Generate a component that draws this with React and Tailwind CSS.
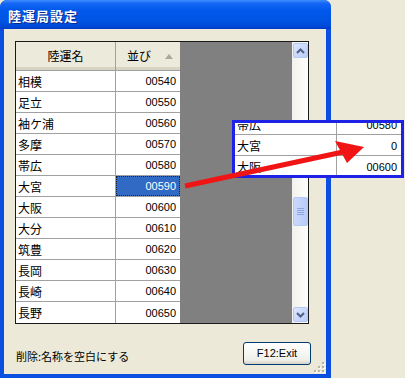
import React from "react";

const rows = [
  ["相模", "00540"],
  ["足立", "00550"],
  ["袖ケ浦", "00560"],
  ["多摩", "00570"],
  ["帯広", "00580"],
  ["大宮", "00590"],
  ["大阪", "00600"],
  ["大分", "00610"],
  ["筑豊", "00620"],
  ["長岡", "00630"],
  ["長崎", "00640"],
  ["長野", "00650"],
];

const jp = { fontFamily: '"Noto Sans CJK JP", "Noto Sans", sans-serif' };
const lat = { fontFamily: '"Liberation Sans", Arial, sans-serif' };

function Chevron({ down }) {
  return (
    <svg width="9" height="6" viewBox="0 0 9 6">
      <path
        d={down ? "M1 1 L4.5 4.5 L8 1" : "M1 5 L4.5 1.5 L8 5"}
        fill="none"
        stroke="#4D6185"
        strokeWidth="2"
      />
    </svg>
  );
}

export default function App() {
  return (
    <div className="relative w-[405px] h-[378px] overflow-hidden bg-[#ECE9D8] flex">
      {/* Window */}
      <div className="w-[331px] h-[378px] flex flex-col rounded-t-[7px] bg-[#0A4FE0]">
        {/* Title bar */}
        <div className="h-[29px] flex items-center pl-[8px] rounded-t-[7px] bg-[linear-gradient(180deg,#3D8CFF_0%,#1467F5_12%,#0058EB_35%,#0054E3_70%,#0049D8_90%,#003CC8_100%)]">
          <span
            className="text-white font-bold text-[13px] tracking-[1px] leading-none pt-[1px] [text-shadow:1px_1px_0_#0A2A8A]"
            style={jp}
          >
            陸運局設定
          </span>
        </div>
        {/* Body */}
        <div className="relative flex-1 ml-[4px] mr-[5px] mb-[4px] bg-[#ECE9D8] flex flex-col pt-[12px] pl-[11px]">
          {/* Grid */}
          <div className="w-[294px] h-[283px] border border-[#1A1A1A] flex bg-[#808080]">
            <div className="w-[164px] flex flex-col bg-white">
              {/* Header */}
              <div className="h-[29px] flex bg-[#EBEADB] border-b border-[#A0A0A0] shadow-[inset_0_-3px_0_#D8D4C4]">
                <div className="w-[100px] border-r border-[#A0A0A0] flex items-center justify-center text-[12px] text-black" style={jp}>
                  陸運名
                </div>
                <div className="w-[64px] flex items-center pl-[11px] pr-[7px] text-[12px] text-black" style={jp}>
                  <span className="flex-1">並び</span>
                  <svg width="8" height="5" viewBox="0 0 8 5">
                    <path d="M0 5 L4 0 L8 5 Z" fill="#ACA899" />
                  </svg>
                </div>
              </div>
              {/* Rows */}
              {rows.map(([name, num], i) => {
                const sel = i === 5;
                return (
                  <div key={name} className={`h-[21px] flex ${i < 11 ? "border-b border-[#A0A0A0]" : ""}`}>
                    <div className="w-[100px] border-r border-[#A0A0A0] flex items-center pl-[2px] pt-[1px] text-[12px] text-black" style={jp}>
                      {name}
                    </div>
                    <div className="w-[64px] flex">
                      {sel ? (
                        <div className="flex-1 flex items-center justify-end pr-[3px] pt-[1px] bg-[#316AC5] border border-dotted border-[#222] text-white text-[11px]" style={lat}>
                          {num}
                        </div>
                      ) : (
                        <div className="flex-1 flex items-center justify-end pr-[4px] pt-[1px] text-black text-[11px]" style={lat}>
                          {num}
                        </div>
                      )}
                    </div>
                  </div>
                );
              })}
            </div>
            <div className="flex-1 bg-[#808080]" />
            {/* Scrollbar */}
            <div className="w-[16px] flex flex-col items-center bg-[linear-gradient(90deg,#F3F1EC,#FEFEFB)] py-[1px]">
              <div className="w-[15px] h-[15px] rounded-[2px] border border-[#B6C8F5] bg-[linear-gradient(135deg,#DCE6FE,#B9CCFA)] flex items-center justify-center">
                <Chevron />
              </div>
              <div className="h-[139px]" />
              <div className="w-[15px] h-[29px] rounded-[2px] border border-[#B6C8F5] bg-[linear-gradient(90deg,#CAD8FD,#B8CBF8)] flex flex-col items-center justify-center gap-[1px]">
                <div className="w-[7px] h-[1px] bg-[#8EA6E6]" />
                <div className="w-[7px] h-[1px] bg-[#8EA6E6]" />
                <div className="w-[7px] h-[1px] bg-[#8EA6E6]" />
                <div className="w-[7px] h-[1px] bg-[#8EA6E6]" />
              </div>
              <div className="flex-1" />
              <div className="w-[15px] h-[15px] rounded-[2px] border border-[#B6C8F5] bg-[linear-gradient(135deg,#DCE6FE,#B9CCFA)] flex items-center justify-center">
                <Chevron down />
              </div>
            </div>
          </div>
          {/* Bottom row */}
          <div className="w-[296px] mt-[18px] h-[23px] flex items-center justify-between">
            <span className="text-[11px] text-black pt-[5px] pl-[1px]" style={jp}>
              削除:名称を空白にする
            </span>
            <button
              className="w-[68px] h-[23px] rounded-[3px] border border-[#003C74] bg-[linear-gradient(180deg,#FFFFFF,#F0F0EA_80%,#D6D0C5)] text-[11px] text-black flex items-center justify-center"
              style={lat}
            >
              F12:Exit
            </button>
          </div>
          {/* Grip */}
          <svg className="absolute right-[1px] bottom-[1px]" width="11" height="11" viewBox="0 0 11 11">
            {[[8, 0], [8, 4], [4, 4], [8, 8], [4, 8], [0, 8]].map(([x, y], k) => (
              <g key={k}>
                <rect x={x + 1} y={y + 1} width="2" height="2" fill="#FFFFFF" />
                <rect x={x} y={y} width="2" height="2" fill="#B8B4A2" />
              </g>
            ))}
          </svg>
        </div>
      </div>

      {/* Callout (zoomed view) */}
      <div className="absolute left-[232px] top-[120px] w-[172px] h-[58px] border-[3px] border-[#1E22E6] bg-white overflow-hidden">
        <div className="-mt-[9px] flex flex-col">
          {[["帯広", "00580"], ["大宮", "0"], ["大阪", "00600"]].map(([n, v]) => (
            <div key={n} className="h-[21px] flex border-b border-[#A0A0A0]">
              <div className="w-[102px] border-r border-[#A0A0A0] flex items-end pb-[2px] pl-[2px] text-[12px] leading-[14px] text-black" style={jp}>
                {n}
              </div>
              <div className="flex-1 flex items-end pb-[3px] justify-end pr-[4px] text-[11px] leading-[12px] text-black" style={lat}>
                {v}
              </div>
            </div>
          ))}
        </div>
      </div>

      {/* Red arrow */}
      <svg className="absolute left-0 top-0 pointer-events-none" width="405" height="378" viewBox="0 0 405 378">
        <line x1="185" y1="186" x2="343" y2="152" stroke="#F01414" strokeWidth="5" />
        <polygon points="335,141 364,147 347,163" fill="#F01414" />
      </svg>
    </div>
  );
}
